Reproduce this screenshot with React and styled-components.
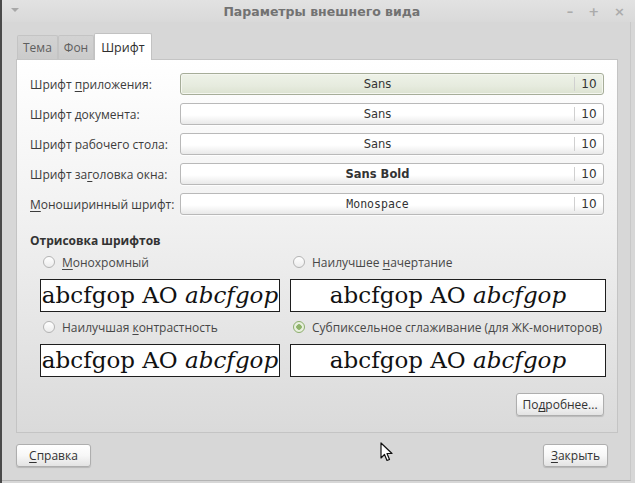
import React from 'react'
import styled, { createGlobalStyle, css } from 'styled-components'

const GlobalStyle = createGlobalStyle`
  html, body {
    margin: 0;
    padding: 0;
    background: #2e2e2e;
  }
  * {
    box-sizing: border-box;
  }
`

const Window = styled.div`
  position: relative;
  width: 635px;
  height: 483px;
  display: flex;
  flex-direction: column;
  background: #d7d7d7;
  border-left: 2px solid #4a4a4a;
  font-family: 'Open Sans', 'DejaVu Sans', sans-serif;
  font-size: 12px;
  color: #3a3a3a;
  overflow: hidden;
`

const TitleBar = styled.div`
  height: 22px;
  display: flex;
  align-items: center;
  padding: 0 10px 0 9px;
  background: linear-gradient(#e2e2e2, #d9d9d9);
`

const MenuArrow = styled.span`
  width: 0;
  height: 0;
  border-left: 4px solid transparent;
  border-right: 4px solid transparent;
  border-top: 4px solid #a8a8a8;
  margin-top: -2px;
`

const Title = styled.div`
  flex: 1;
  text-align: center;
  font-family: 'DejaVu Sans', sans-serif;
  font-weight: bold;
  font-size: 12.5px;
  color: #727272;
  padding-left: 58px;
`

const Controls = styled.div`
  display: flex;
  gap: 15px;
  color: #ababab;
  font-family: 'DejaVu Sans', sans-serif;
  font-size: 13px;
  font-weight: bold;
`

const Body = styled.div`
  flex: 1;
  display: flex;
  flex-direction: column;
  padding: 10px 0 0 14px;
  border-right: 1px solid #c8c8c8;
  margin-right: 4px;
  border-bottom: 1px solid #b4b4b4;
  margin-bottom: 2px;
`

const Tabs = styled.div`
  display: flex;
  align-items: flex-end;
  height: 27px;
  padding-left: 1px;
`

const Tab = styled.div`
  height: ${p => (p.$active ? '27px' : '24px')};
  padding: 0 ${p => (p.$active ? '6px' : '5px')};
  display: flex;
  align-items: center;
  border: 1px solid ${p => (p.$active ? '#c2c2c2' : '#c4c4c4')};
  border-bottom: none;
  border-radius: 2px 2px 0 0;
  background: ${p => (p.$active ? '#ffffff' : 'linear-gradient(#d3d3d3, #cbcbcb)')};
  color: ${p => (p.$active ? '#2f2f2f' : '#5e5e5e')};
  font-size: ${p => (p.$active ? '12.5px' : '12px')};
  margin-bottom: ${p => (p.$active ? '-1px' : '0')};
  position: relative;
  z-index: ${p => (p.$active ? 1 : 0)};
`

const Panel = styled.div`
  width: 602px;
  height: 374px;
  border: 1px solid #c4c4c4;
  background: linear-gradient(#ffffff 0%, #f2f2f2 40%, #dadada 100%);
  padding: 13px 13px 0 13px;
  display: flex;
  flex-direction: column;
`

const FontRows = styled.div`
  display: flex;
  flex-direction: column;
  gap: 8px;
`

const FontRow = styled.div`
  display: flex;
  align-items: center;
  height: 22px;
`

const Label = styled.label`
  width: 150px;
  color: #3c3c3c;
`

const Mn = styled.span`
  text-decoration: underline;
  text-underline-offset: 2px;
`

const FontButton = styled.div`
  flex: 1;
  height: 22px;
  display: flex;
  align-items: center;
  border: 1px solid #b9b9b9;
  border-radius: 3px;
  background: linear-gradient(#ffffff, #ffffff 55%, #e9e9e9);
  box-shadow: 0 1px 0 rgba(255, 255, 255, 0.8);
  ${p =>
    p.$hover &&
    css`
      border-color: #a6ad99;
      background: linear-gradient(#eef2e8, #e6ebde 60%, #dce2d1);
      box-shadow: inset 0 0 0 1px #f4f6ef;
    `}
`

const FontName = styled.span`
  flex: 1;
  text-align: center;
  color: #333;
  font-family: ${p => (p.$mono ? "'DejaVu Sans Mono', monospace" : "'DejaVu Sans', sans-serif")};
  font-size: 11.5px;
  font-weight: ${p => (p.$bold ? 'bold' : 'normal')};
`

const FontSize = styled.span`
  width: 29px;
  height: 14px;
  line-height: 14px;
  border-left: 1px solid #d0d0d0;
  text-align: center;
  font-family: 'DejaVu Sans', sans-serif;
  font-size: 12px;
  color: #333;
`

const SectionTitle = styled.div`
  margin-top: 17px;
  font-weight: bold;
  color: #333;
  font-size: 12px;
`

const RenderGrid = styled.div`
  display: grid;
  grid-template-columns: 240px 316px;
  column-gap: 10px;
  padding-left: 10px;
  margin-top: 3px;
`

const Option = styled.div`
  display: flex;
  flex-direction: column;
`

const RadioRow = styled.div`
  display: flex;
  align-items: center;
  height: 20px;
  margin-top: ${p => (p.$second ? '5px' : '0')};
  margin-bottom: 7px;
  padding-left: 3px;
  color: #474747;
  font-size: 12px;
`

const Radio = styled.span`
  width: 12px;
  height: 12px;
  border-radius: 50%;
  margin-right: 7px;
  border: 1px solid ${p => (p.$checked ? '#8cae6c' : '#b3b3b3')};
  background: ${p =>
    p.$checked
      ? 'radial-gradient(circle, #8fb36b 0 2.5px, #e8f0de 3px)'
      : 'linear-gradient(#ffffff, #ececec)'};
`

const Preview = styled.div`
  height: 33px;
  border: 1px solid #1e1e1e;
  background: #ffffff;
  display: flex;
  align-items: center;
  justify-content: center;
  font-family: 'DejaVu Serif', serif;
  font-size: 23px;
  color: #111;
  white-space: pre;
  overflow: hidden;
  padding-bottom: 1px;
`

const MoreRow = styled.div`
  display: flex;
  justify-content: flex-end;
  margin-top: 16px;
`

const Button = styled.div`
  height: 23px;
  padding: 0 8px;
  display: flex;
  align-items: center;
  justify-content: center;
  border: 1px solid #aeaeae;
  border-radius: 3px;
  background: linear-gradient(#ffffff, #f7f7f7 50%, #e3e3e3);
  box-shadow: 0 1px 1px rgba(0, 0, 0, 0.15);
  color: #333;
  font-size: 12px;
  width: ${p => p.$w}px;
`

const Footer = styled.div`
  display: flex;
  justify-content: space-between;
  align-items: center;
  width: 592px;
  margin-top: 11px;
`

const Cursor = styled.svg`
  position: absolute;
  left: 378px;
  top: 442px;
`

const rows = [
  { label: <>Шрифт <Mn>п</Mn>риложения:</>, name: 'Sans', hover: true },
  { label: <>Шрифт <Mn>д</Mn>окумента:</>, name: 'Sans' },
  { label: <>Шрифт рабочего стола:</>, name: 'Sans' },
  { label: <>Шрифт за<Mn>г</Mn>оловка окна:</>, name: 'Sans Bold', bold: true },
  { label: <><Mn>М</Mn>оноширинный шрифт:</>, name: 'Monospace', mono: true },
]

const Sample = () => (
  <Preview>
    abcfgop AO <em>abcfgop</em>
  </Preview>
)

const App = () => (
  <>
    <GlobalStyle />
    <Window>
      <TitleBar>
        <MenuArrow />
        <Title>Параметры внешнего вида</Title>
        <Controls>
          <span>–</span>
          <span>+</span>
          <span>×</span>
        </Controls>
      </TitleBar>
      <Body>
        <Tabs>
          <Tab>Тема</Tab>
          <Tab>Фон</Tab>
          <Tab $active>Шрифт</Tab>
        </Tabs>
        <Panel>
          <FontRows>
            {rows.map((r, i) => (
              <FontRow key={i}>
                <Label>{r.label}</Label>
                <FontButton $hover={r.hover}>
                  <FontName $bold={r.bold} $mono={r.mono}>{r.name}</FontName>
                  <FontSize>10</FontSize>
                </FontButton>
              </FontRow>
            ))}
          </FontRows>
          <SectionTitle>Отрисовка шрифтов</SectionTitle>
          <RenderGrid>
            <Option>
              <RadioRow>
                <Radio />
                <span><Mn>М</Mn>онохромный</span>
              </RadioRow>
              <Sample />
            </Option>
            <Option>
              <RadioRow>
                <Radio />
                <span>Наилучшее <Mn>н</Mn>ачертание</span>
              </RadioRow>
              <Sample />
            </Option>
            <Option>
              <RadioRow $second>
                <Radio />
                <span>Наилучшая <Mn>к</Mn>онтрастность</span>
              </RadioRow>
              <Sample />
            </Option>
            <Option>
              <RadioRow $second>
                <Radio $checked />
                <span>Субпиксельное сглаживание (для ЖК-мониторов)</span>
              </RadioRow>
              <Sample />
            </Option>
          </RenderGrid>
          <MoreRow>
            <Button $w={88}>По<Mn>д</Mn>робнее...</Button>
          </MoreRow>
        </Panel>
        <Footer>
          <Button $w={75}><Mn>С</Mn>правка</Button>
          <Button $w={65}><Mn>З</Mn>акрыть</Button>
        </Footer>
      </Body>
      <Cursor width="14" height="20" viewBox="0 0 14 20">
        <path d="M1 1 L1 16 L4.5 12.5 L7 18.5 L9.5 17.5 L7 11.5 L12 11.5 Z" fill="#ffffff" stroke="#111" strokeWidth="1.2" strokeLinejoin="round" />
      </Cursor>
    </Window>
  </>
)

export default App
